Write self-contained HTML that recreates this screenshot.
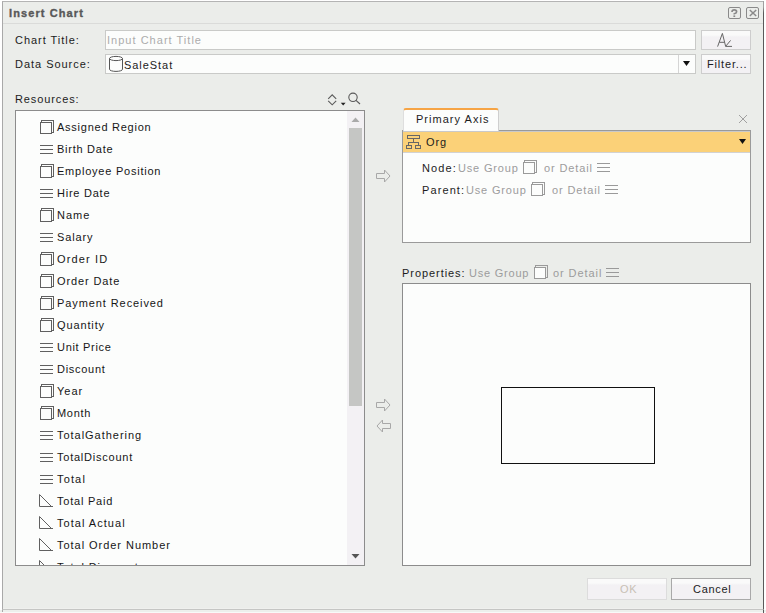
<!DOCTYPE html>
<html><head><meta charset="utf-8">
<style>
html,body{margin:0;padding:0;width:766px;height:613px;overflow:hidden;background:#fff;}
body{position:relative;font-family:"Liberation Sans",sans-serif;}
.a{position:absolute;box-sizing:border-box;}
.t{position:absolute;font-size:11px;line-height:13px;letter-spacing:.9px;white-space:nowrap;color:#1c1c1c;}
.li .t{letter-spacing:.88px;color:#161616}
.g{color:#9c9c9c;}
#dlg{left:2px;top:1px;width:762px;height:609px;background:#ebedea;border-left:1px solid #a9a9a9;border-top:1px solid #b4b4b4;border-right:1px solid #5a5a5a;border-bottom:1px solid #c5c6c4;}
.inp{background:#fcfdfc;border:1px solid #c9cac8;}
.btn{background:linear-gradient(#fafafa 0,#fafafa 4px,#f3f1f4 6px,#f3f1f4 100%);border:1px solid #cdcdcd;}
.box{background:#fcfdfc;border:1px solid #8c8c8c;}
svg{position:absolute;left:0;top:0;}
</style></head><body>
<div id="dlg" class="a"></div>
<div class="a" style="left:0;top:610px;width:766px;height:2px;background:#edefec"></div>
<div class="a" style="left:0;top:612px;width:766px;height:1px;background:#f8f9f8"></div>
<div class="a" style="left:2px;top:610px;width:1px;height:2px;background:#a9a9a9"></div>
<div class="a" style="left:3px;top:608px;width:760px;height:1px;background:#eff0ee"></div>
<div class="a" style="left:763px;top:610px;width:1px;height:3px;background:#5a5a5a"></div>
<div class="a" style="left:763px;top:1px;width:1px;height:14px;background:linear-gradient(#a0a0a0 0,#a0a0a0 6px,#5a5a5a 12px)"></div>
<!-- header separator -->
<div class="a" style="left:3px;top:23px;width:760px;height:1px;background:#dadbd9"></div>
<div class="t" style="left:9px;top:7px;font-weight:bold;letter-spacing:1.1px;color:#585858;-webkit-text-stroke:.35px #585858">Insert Chart</div>

<!-- top rows -->
<div class="t" style="left:15px;top:34px;letter-spacing:.97px">Chart Title:</div>
<div class="t" style="left:15px;top:58px;letter-spacing:.97px">Data Source:</div>
<div class="a inp" style="left:105px;top:30px;width:591px;height:20px"></div>
<div class="t" style="left:107px;top:34px;color:#acacac;letter-spacing:1.02px">Input Chart Title</div>
<div class="a btn" style="left:701px;top:30px;width:50px;height:20px"></div>
<div class="a inp" style="left:105px;top:54px;width:591px;height:20px"></div>
<div class="a" style="left:678px;top:55px;width:1px;height:18px;background:#d5d5d5"></div>
<div class="t" style="left:124px;top:59px;letter-spacing:.95px">SaleStat</div>
<div class="a btn" style="left:701px;top:54px;width:50px;height:20px"></div>
<div class="t" style="left:707px;top:58px;letter-spacing:.83px">Filter...</div>

<div class="t" style="left:15px;top:93px;letter-spacing:.89px">Resources:</div>

<!-- list box -->
<div class="a box li" style="left:15px;top:110px;width:350px;height:456px;overflow:hidden">
  <div class="a" style="left:331px;top:0;width:17px;height:454px;background:#f3f1f4"></div>
  <div class="a" style="left:333px;top:17px;width:13px;height:278px;background:#c5c6c4"></div>
  <div class="t" style="left:41px;top:10px;letter-spacing:0.75px">Assigned Region</div>
  <div class="t" style="left:41px;top:32px;letter-spacing:0.74px">Birth Date</div>
  <div class="t" style="left:41px;top:54px;letter-spacing:0.77px">Employee Position</div>
  <div class="t" style="left:41px;top:76px;letter-spacing:0.76px">Hire Date</div>
  <div class="t" style="left:41px;top:98px;letter-spacing:1.0px">Name</div>
  <div class="t" style="left:41px;top:120px;letter-spacing:0.88px">Salary</div>
  <div class="t" style="left:41px;top:142px;letter-spacing:1.15px">Order ID</div>
  <div class="t" style="left:41px;top:164px;letter-spacing:0.88px">Order Date</div>
  <div class="t" style="left:41px;top:186px;letter-spacing:0.91px">Payment Received</div>
  <div class="t" style="left:41px;top:208px;letter-spacing:0.87px">Quantity</div>
  <div class="t" style="left:41px;top:230px;letter-spacing:0.69px">Unit Price</div>
  <div class="t" style="left:41px;top:252px;letter-spacing:0.72px">Discount</div>
  <div class="t" style="left:41px;top:274px;letter-spacing:0.98px">Year</div>
  <div class="t" style="left:41px;top:296px;letter-spacing:0.68px">Month</div>
  <div class="t" style="left:41px;top:318px;letter-spacing:0.97px">TotalGathering</div>
  <div class="t" style="left:41px;top:340px;letter-spacing:0.77px">TotalDiscount</div>
  <div class="t" style="left:41px;top:362px;letter-spacing:1.15px">Total</div>
  <div class="t" style="left:41px;top:384px;letter-spacing:0.78px">Total Paid</div>
  <div class="t" style="left:41px;top:406px;letter-spacing:1.03px">Total Actual</div>
  <div class="t" style="left:41px;top:428px;letter-spacing:0.96px">Total Order Number</div>
  <div class="t" style="left:41px;top:450px;letter-spacing:0.9px">Total Discount</div>
</div>

<!-- tab -->

<!-- panel 1 -->
<div class="a box" style="left:402px;top:130px;width:349px;height:113px;border-color:#9a9a9a"></div>
<div class="a" style="left:403px;top:108px;width:96px;height:23px;background:#fcfdfc;border:1px solid #dedede;border-right-color:#cfcfcf;border-top:2px solid #f6a445;border-bottom:none;border-radius:3px 3px 0 0"></div>
<div class="t" style="left:416px;top:113px;letter-spacing:1.03px">Primary Axis</div>
<div class="a" style="left:403px;top:131px;width:347px;height:22px;background:#fbd178;border-top:1px solid #c9c9c9;border-bottom:1px solid #d2d2d2"></div>
<div class="t" style="left:426px;top:136px">Org</div>
<div class="t" style="left:422px;top:162px;letter-spacing:1.1px">Node:</div>
<div class="t g" style="left:458px;top:162px;letter-spacing:.83px">Use Group</div>
<div class="t g" style="left:544px;top:162px;letter-spacing:.88px">or Detail</div>
<div class="t" style="left:422px;top:184px;letter-spacing:1.1px">Parent:</div>
<div class="t g" style="left:466px;top:184px;letter-spacing:.83px">Use Group</div>
<div class="t g" style="left:552px;top:184px;letter-spacing:.88px">or Detail</div>

<!-- properties -->
<div class="t" style="left:402px;top:267px;letter-spacing:.94px">Properties:</div>
<div class="t g" style="left:469px;top:267px;letter-spacing:.78px">Use Group</div>
<div class="t g" style="left:553px;top:267px;letter-spacing:.92px">or Detail</div>
<div class="a box" style="left:402px;top:283px;width:349px;height:283px;border-color:#8c8c8c"></div>
<div class="a" style="left:501px;top:387px;width:154px;height:77px;border:1px solid #111;background:#fcfdfc"></div>

<!-- buttons -->
<div class="a btn" style="left:587px;top:578px;width:80px;height:22px;border-color:#dcdcdc"></div>
<div class="t" style="left:620px;top:583px;color:#c8c0b4;letter-spacing:.7px">OK</div>
<div class="a btn" style="left:671px;top:578px;width:80px;height:22px;border-color:#a9a9a9"></div>
<div class="t" style="left:693px;top:583px;letter-spacing:.7px">Cancel</div>

<svg width="766" height="613" viewBox="0 0 766 613">
  <defs>
    <g id="fld"><rect x="1.5" y="0.5" width="12" height="12" fill="none" stroke="currentColor"/><rect x="0.5" y="2.5" width="11" height="11" fill="#fcfdfc" stroke="currentColor"/></g>
    <g id="lns"><path d="M0 0.5H13M0 4.5H13M0 8.5H13" stroke="currentColor" fill="none"/></g>
    <g id="tri"><path d="M0.5 0.5V12.5H14M0.5 0.5L12.5 12.5" stroke="currentColor" fill="none"/></g>
    <clipPath id="lc"><rect x="16" y="111" width="331" height="454"/></clipPath>
  </defs>
  <!-- title bar buttons -->
  <g fill="none" stroke="#8a8a8a">
    <rect x="728.5" y="7.5" width="12" height="11" rx="1.5"/>
    <rect x="746.5" y="7.5" width="12" height="11" rx="1.5"/>
    <path d="M749.8 10L756.2 16M756.2 10L749.8 16" stroke-width="1.5"/>
  </g>
  <path d="M732 12Q732 9.9 734.3 9.9Q736.6 9.9 736.6 11.8Q736.6 13.2 734.3 13.8V14.6" fill="none" stroke="#8a8a8a" stroke-width="1.7"/><rect x="733.4" y="15.4" width="1.8" height="1.6" fill="#8a8a8a"/>
  <!-- A icon -->
  <g fill="none" stroke="#666" stroke-width="1">
    <path d="M717.6 46.6L722.4 33.4L725.6 46.2M719.3 42.3H724.5"/>
    <path d="M730.6 40.4L725.6 46.4H732"/>
  </g>
  <!-- select arrow -->
  <path d="M683 61H690L686.5 66Z" fill="#111"/>
  <!-- cylinder -->
  <g fill="none" stroke="#555">
    <ellipse cx="116" cy="58.5" rx="6.5" ry="2.1"/>
    <path d="M109.5 58.5V69.3A6.5 2.1 0 0 0 122.5 69.3V58.5"/>
  </g>
  <!-- sort & search -->
  <g fill="none" stroke="#5a5a5a" stroke-width="1.1">
    <path d="M328.2 98.8L332.2 94.8L336.2 98.8M328.2 100.8L332.2 104.8L336.2 100.8"/>
    <circle cx="353" cy="97.3" r="4.2"/>
    <path d="M356 100.3L360 104"/>
  </g>
  <path d="M340.8 102.8H345.6L343.2 105.4Z" fill="#222"/>
  <!-- scroll arrows -->
  <path d="M351.5 122H359.5L355.5 117.5Z" fill="#aaa"/>
  <path d="M351.5 554H359.5L355.5 558.5Z" fill="#555"/>
  <!-- list icons -->
  <g clip-path="url(#lc)" color="#606060">
    <use href="#fld" x="40" y="120"/>
    <use href="#lns" x="40" y="145"/>
    <use href="#fld" x="40" y="164"/>
    <use href="#lns" x="40" y="189"/>
    <use href="#fld" x="40" y="208"/>
    <use href="#lns" x="40" y="233"/>
    <use href="#fld" x="40" y="252"/>
    <use href="#fld" x="40" y="274"/>
    <use href="#fld" x="40" y="296"/>
    <use href="#fld" x="40" y="318"/>
    <use href="#lns" x="40" y="343"/>
    <use href="#lns" x="40" y="365"/>
    <use href="#fld" x="40" y="384"/>
    <use href="#fld" x="40" y="406"/>
    <use href="#lns" x="40" y="431"/>
    <use href="#lns" x="40" y="453"/>
    <use href="#lns" x="40" y="475"/>
    <use href="#tri" x="39" y="494"/>
    <use href="#tri" x="39" y="516"/>
    <use href="#tri" x="39" y="538"/>
    <use href="#tri" x="39" y="560"/>
  </g>
  <!-- arrows -->
  <g fill="none" stroke="#a8a8a8">
    <path d="M376.5 173.5H384.5V170L390 176L384.5 182V178.5H376.5Z"/>
    <path d="M376.5 402.5H384.5V399L390 405L384.5 411V407.5H376.5Z"/>
    <path d="M390.5 423.5H382.5V420L377 426L382.5 432V428.5H390.5Z"/>
  </g>
  <!-- close X -->
  <path d="M739 115L747 123M747 115L739 123" stroke="#a0a0a0" fill="none"/>
  <!-- org icon -->
  <g fill="none" stroke="#666">
    <rect x="407.5" y="135.5" width="12" height="3"/>
    <path d="M413.5 139V142M408 142.5H419M408.5 142.5V145M418.5 142.5V145"/>
    <rect x="406.5" y="145.5" width="5" height="3"/>
    <rect x="415.5" y="145.5" width="5" height="3"/>
  </g>
  <path d="M739 139H746L742.5 144Z" fill="#111"/>
  <!-- node/parent/properties icons -->
  <g color="#9a9a9a">
    <use href="#fld" x="523" y="160"/>
    <use href="#lns" x="597" y="163"/>
    <use href="#fld" x="531" y="182"/>
    <use href="#lns" x="605" y="185"/>
    <use href="#fld" x="534" y="265"/>
    <use href="#lns" x="606" y="268"/>
  </g>
</svg>
</body></html>
